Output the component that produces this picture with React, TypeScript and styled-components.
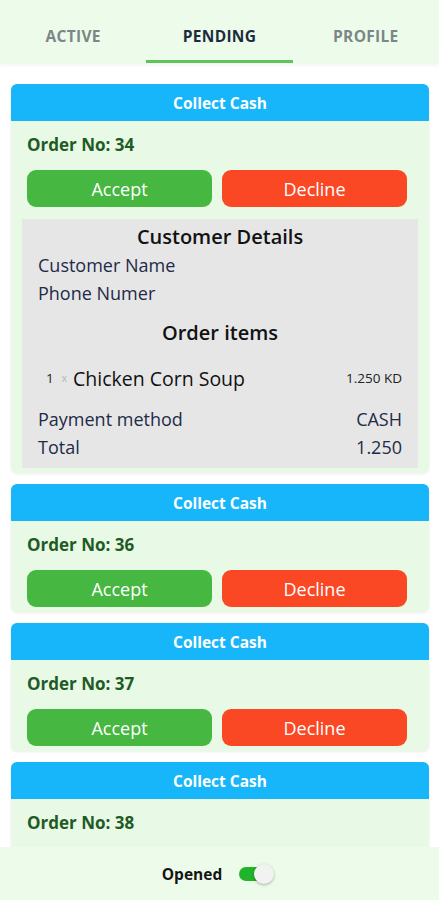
import React, { useState } from "react";
import styled, { createGlobalStyle } from "styled-components";

const GlobalStyle = createGlobalStyle`
  html, body {
    margin: 0;
    padding: 0;
    background: #ffffff;
    font-family: "Open Sans", "Noto Sans", Arial, sans-serif;
  }
  * { box-sizing: border-box; }
`;

interface Order {
  id: number;
  expanded?: boolean;
}

const orders: Order[] = [{ id: 34, expanded: true }, { id: 36 }, { id: 37 }, { id: 38 }];

const Screen = styled.div`
  height: 100vh;
  display: flex;
  flex-direction: column;
  overflow: hidden;
`;

const TabBar = styled.div`
  height: 63px;
  display: flex;
  background: #edfcea;
  box-shadow: 0 2px 4px rgba(0, 0, 0, 0.06);
  position: relative;
  z-index: 1;
  flex-shrink: 0;
`;

const Tab = styled.div<{ $active?: boolean }>`
  flex: 1;
  display: flex;
  align-items: center;
  justify-content: center;
  padding-top: 12px;
  font-size: 15.5px;
  font-weight: 700;
  letter-spacing: 0.3px;
  color: ${(p) => (p.$active ? "#1d2b3f" : "#7b8787")};
  border-bottom: 3px solid ${(p) => (p.$active ? "#5cc65a" : "transparent")};
`;

const List = styled.div`
  flex: 1;
  overflow: hidden;
  padding: 21px 10px 0 11px;
  display: flex;
  flex-direction: column;
  gap: 11px;
`;

const Card = styled.div`
  background: #e8f9e5;
  border-radius: 6px;
  box-shadow: 0 1px 3px rgba(0, 0, 0, 0.08);
  padding-bottom: 5px;
  flex-shrink: 0;
`;

const CardHeader = styled.div`
  height: 37px;
  background: #17b6fa;
  border-radius: 6px 6px 0 0;
  color: #ffffff;
  font-size: 15.5px;
  font-weight: 700;
  display: flex;
  align-items: center;
  justify-content: center;
`;

const OrderNo = styled.div`
  padding: 12px 16px 0;
  height: 49px;
  line-height: 24px;
  font-size: 17px;
  font-weight: 700;
  color: #1f5b25;
`;

const Actions = styled.div`
  display: flex;
  gap: 10px;
  padding: 0 22px 0 16px;
`;

const ActionButton = styled.button<{ $kind: "accept" | "decline" }>`
  flex: 1;
  height: 37px;
  border: none;
  border-radius: 9px;
  color: #ffffff;
  font-family: inherit;
  font-size: 18px;
  background: ${(p) => (p.$kind === "accept" ? "#46b740" : "#fa4824")};
`;

const Details = styled.div`
  margin: 12px 11px 0;
  background: #e6e6e6;
  padding: 4px 16px 7px;
  color: #1e2b48;
`;

const Heading = styled.div<{ $gap?: number }>`
  text-align: center;
  font-size: 20px;
  font-weight: 600;
  color: #121212;
  line-height: 28px;
  margin-top: ${(p) => p.$gap ?? 0}px;
`;

const Line = styled.div<{ $gap?: number }>`
  display: flex;
  justify-content: space-between;
  align-items: center;
  font-size: 18px;
  line-height: 27.5px;
  margin-top: ${(p) => p.$gap ?? 0}px;
`;

const ItemRow = styled.div`
  display: flex;
  align-items: center;
  height: 30px;
  margin-top: 16px;
  padding-left: 8px;
`;

const Qty = styled.span`
  font-size: 13.5px;
  color: #222;
`;

const Times = styled.span`
  font-size: 10px;
  color: #b5b5b5;
  margin: 0 6px 0 8px;
`;

const ItemName = styled.span`
  flex: 1;
  font-size: 19.5px;
  color: #111;
`;

const Price = styled.span`
  font-size: 13.5px;
  color: #222;
`;

const Footer = styled.div`
  height: 53px;
  background: #edfcea;
  display: flex;
  align-items: center;
  justify-content: center;
  gap: 17px;
  flex-shrink: 0;
  padding-right: 4px;
`;

const FooterLabel = styled.span`
  font-size: 15.5px;
  font-weight: 700;
  color: #151515;
`;

const Track = styled.button<{ $on: boolean }>`
  width: 34px;
  height: 14px;
  border-radius: 7px;
  border: none;
  padding: 0;
  position: relative;
  background: ${(p) => (p.$on ? "#1fb42a" : "#b9b9b9")};
`;

const Knob = styled.span<{ $on: boolean }>`
  position: absolute;
  top: -3px;
  left: ${(p) => (p.$on ? "15px" : "-2px")};
  width: 20px;
  height: 20px;
  border-radius: 50%;
  background: #f2f2f2;
  box-shadow: 0 1px 3px rgba(0, 0, 0, 0.3);
`;

function OrderCard({ order }: { order: Order }) {
  return (
    <Card>
      <CardHeader>Collect Cash</CardHeader>
      <OrderNo>Order No: {order.id}</OrderNo>
      <Actions>
        <ActionButton $kind="accept">Accept</ActionButton>
        <ActionButton $kind="decline">Decline</ActionButton>
      </Actions>
      {order.expanded && (
        <Details>
          <Heading>Customer Details</Heading>
          <Line $gap={1}>Customer Name</Line>
          <Line>Phone Numer</Line>
          <Heading $gap={12}>Order items</Heading>
          <ItemRow>
            <Qty>1</Qty>
            <Times>x</Times>
            <ItemName>Chicken Corn Soup</ItemName>
            <Price>1.250 KD</Price>
          </ItemRow>
          <Line $gap={13}>
            <span>Payment method</span>
            <span>CASH</span>
          </Line>
          <Line>
            <span>Total</span>
            <span>1.250</span>
          </Line>
        </Details>
      )}
    </Card>
  );
}

export default function App() {
  const [opened, setOpened] = useState(true);

  return (
    <Screen>
      <GlobalStyle />
      <TabBar>
        <Tab>ACTIVE</Tab>
        <Tab $active>PENDING</Tab>
        <Tab>PROFILE</Tab>
      </TabBar>
      <List>
        {orders.map((o) => (
          <OrderCard key={o.id} order={o} />
        ))}
      </List>
      <Footer>
        <FooterLabel>Opened</FooterLabel>
        <Track $on={opened} onClick={() => setOpened(!opened)}>
          <Knob $on={opened} />
        </Track>
      </Footer>
    </Screen>
  );
}
